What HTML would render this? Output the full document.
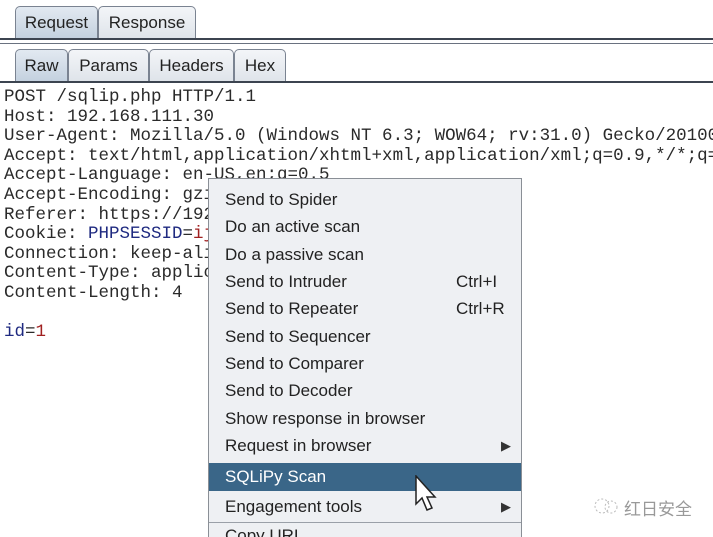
<!DOCTYPE html>
<html><head><style>
html,body{margin:0;width:713px;height:537px;overflow:hidden}
body{background:#fff;position:relative;font-family:"Liberation Sans",sans-serif}
.tab{position:absolute;height:32px;border:1px solid #7a8391;border-bottom:none;border-radius:5px 5px 0 0;background:linear-gradient(#f3f5f8,#dfe4ea);font-size:17px;color:#222;line-height:32px;text-align:center;box-sizing:border-box}
.sel{background:linear-gradient(#e2e9f1,#c4d1df)}
.line{position:absolute;left:0;width:713px;background:#3c4450}
pre{position:absolute;left:4px;top:88px;margin:0;font-family:"Liberation Mono",monospace;font-size:17.5px;line-height:19.6px;color:#2a2a2a}
.b{color:#1f2a80}.r{color:#a02020}
.menu{position:absolute;left:208px;top:178px;width:314px;height:359px;background:#eef0f3;border:1px solid #8a8f96;border-bottom:none;box-sizing:border-box;overflow:hidden}
.it{position:absolute;left:16px;font-size:17px;color:#222;white-space:nowrap}
.sc{position:absolute;left:247px;font-size:17px;color:#222}
.ar{position:absolute;left:292px;font-size:13px;color:#333}
</style></head><body>
<div class="tab sel" style="left:15px;top:6px;width:83px">Request</div>
<div class="tab" style="left:98px;top:6px;width:98px">Response</div>
<div class="line" style="top:38px;height:2px"></div>
<div class="line" style="top:43px;height:1px;background:#6a7280"></div>
<div class="tab sel" style="left:15px;top:49px;width:53px">Raw</div>
<div class="tab" style="left:68px;top:49px;width:81px">Params</div>
<div class="tab" style="left:149px;top:49px;width:85px">Headers</div>
<div class="tab" style="left:234px;top:49px;width:52px">Hex</div>
<div class="line" style="top:81px;height:2px"></div>
<pre>POST /sqlip.php HTTP/1.1
Host: 192.168.111.30
User-Agent: Mozilla/5.0 (Windows NT 6.3; WOW64; rv:31.0) Gecko/20100
Accept: text/html,application/xhtml+xml,application/xml;q=0.9,*/*;q=
Accept-Language: en-US,en;q=0.5
Accept-Encoding: gzip
Referer: https://192
Cookie: <span class="b">PHPSESSID</span>=<span class="r">ij</span>
Connection: keep-alive
Content-Type: application
Content-Length: 4

<span class="b">id</span>=<span class="r">1</span></pre>
<div class="menu">
<div class="it" style="top:11px">Send to Spider</div>
<div class="it" style="top:38px">Do an active scan</div>
<div class="it" style="top:66px">Do a passive scan</div>
<div class="it" style="top:93px">Send to Intruder</div><div class="sc" style="top:93px">Ctrl+I</div>
<div class="it" style="top:120px">Send to Repeater</div><div class="sc" style="top:120px">Ctrl+R</div>
<div class="it" style="top:148px">Send to Sequencer</div>
<div class="it" style="top:175px">Send to Comparer</div>
<div class="it" style="top:202px">Send to Decoder</div>
<div class="it" style="top:230px">Show response in browser</div>
<div class="it" style="top:257px">Request in browser</div><div class="ar" style="top:259px">▶</div>
<div style="position:absolute;left:0;top:284px;width:312px;height:28px;background:#3a6688"></div>
<div class="it" style="top:288px;color:#fff">SQLiPy Scan</div>
<div class="it" style="top:318px">Engagement tools</div><div class="ar" style="top:320px">▶</div>
<div style="position:absolute;left:0;top:343px;width:312px;height:1px;background:#9aa0a8"></div>
<div class="it" style="top:347px">Copy URL</div>
</div>
<svg style="position:absolute;left:414px;top:475px" width="26" height="40" viewBox="0 0 26 40"><path d="M2 1 L2 29 L8 23 L13 35 L18 33 L13 22 L21 22 Z" fill="#fff" stroke="#222" stroke-width="1.5"/></svg>
<svg style="position:absolute;left:592px;top:495px" width="28" height="22"><circle cx="10" cy="11" r="7" fill="none" stroke="#bbb" stroke-dasharray="2 2"/><circle cx="19" cy="12" r="6" fill="none" stroke="#bbb" stroke-dasharray="2 2"/></svg>
<div style="position:absolute;left:624px;top:495px;font-family:'Noto Sans CJK SC',sans-serif;font-size:17px;color:#999">红日安全</div>
</body></html>
